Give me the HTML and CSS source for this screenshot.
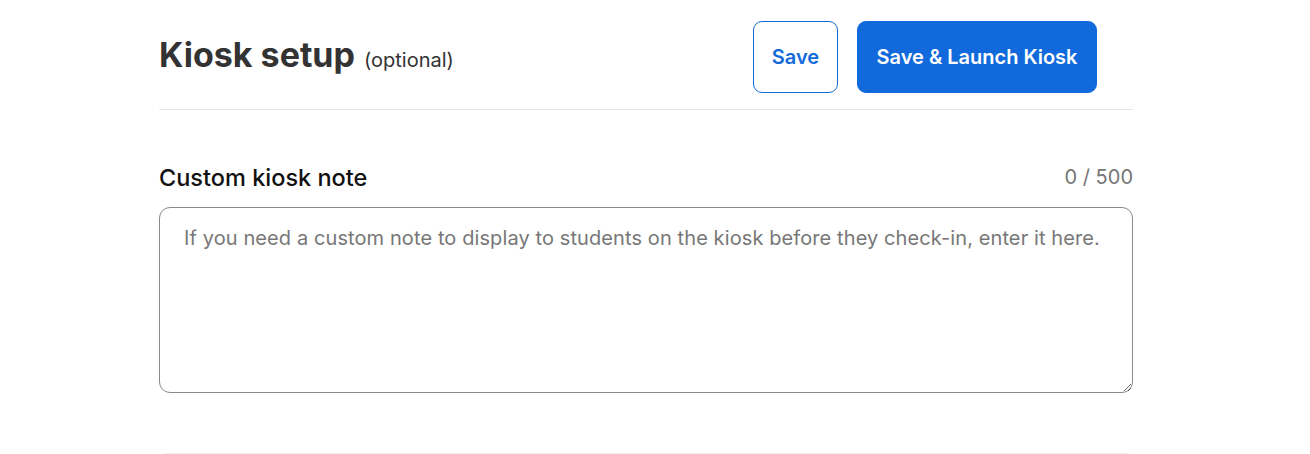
FILE: index.html
```html
<!DOCTYPE html>
<html lang="en">
<head>
<meta charset="utf-8">
<title>Kiosk setup</title>
<link rel="stylesheet" href="styles.css">
</head>
<body>
<main class="page">
  <header class="header">
    <h1 class="title">Kiosk setup <span class="title-note">(optional)</span></h1>
    <div class="actions">
      <button class="btn btn-outline" type="button">Save</button>
      <button class="btn btn-primary" type="button">Save &amp; Launch Kiosk</button>
    </div>
  </header>
  <section class="field">
    <div class="field-head">
      <label class="field-label" for="note">Custom kiosk note</label>
      <span class="counter">0 / 500</span>
    </div>
    <textarea id="note" class="note" placeholder="If you need a custom note to display to students on the kiosk before they check-in, enter it here."></textarea>
  </section>
  <div class="divider"></div>
</main>
</body>
</html>
```

FILE: styles.css
```css
* { box-sizing: border-box; }
html, body { margin: 0; padding: 0; background: #fff; }
body { font-family: Inter, "Noto Sans", sans-serif; color: #333; }
.page { width: 974px; margin-left: 159px; }
.header {
  display: flex;
  align-items: center;
  justify-content: space-between;
  padding: 21px 36px 16px 0;
  border-bottom: 1px solid #e6e6e6;
}
.title {
  margin: 0;
  font-size: 34px;
  font-weight: 700;
  line-height: 40px;
  color: #333;
}
.title-note {
  font-size: 20px;
  font-weight: 400;
  margin-left: 1px;
}
.actions { display: flex; gap: 19px; }
.btn {
  font-family: inherit;
  font-size: 20px;
  font-weight: 600;
  height: 72px;
  border-radius: 9px;
  cursor: pointer;
  padding: 0;
}
.btn-outline {
  width: 85px;
  background: #fff;
  color: #136bdb;
  border: 1px solid #136bdb;
}
.btn-primary {
  width: 240px;
  background: #1169dc;
  color: #fff;
  border: 1px solid #1169dc;
}
.field { margin-top: 55px; }
.field-head {
  display: flex;
  justify-content: space-between;
  align-items: center;
  height: 24px;
  margin-bottom: 18px;
}
.field-label { font-size: 23.5px; font-weight: 500; color: #111; }
.counter { font-size: 20px; color: #767676; }
.note {
  display: block;
  width: 100%;
  height: 186px;
  padding: 16px 24px;
  border: 1px solid #8a8a8a;
  border-radius: 11px;
  font-family: inherit;
  font-size: 20px;
  letter-spacing: 0.1px;
  line-height: 28px;
  color: #333;
  resize: vertical;
}
.note::placeholder { color: #777; }
.divider {
  margin: 60px 4px 0 5px;
  height: 1px;
  background: #f0f0f0;
}
```
